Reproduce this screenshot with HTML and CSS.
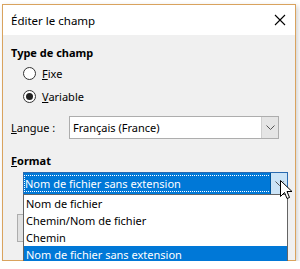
FILE: index.html
```html
<!DOCTYPE html>
<html lang="fr">
<head>
    <meta charset="UTF-8">
    <meta name="viewport" content="width=device-width, initial-scale=1.0">
    <title>Éditer le champ</title>
    <link rel="stylesheet" href="styles.css">
</head>
<body>
    <div class="window">
        <div class="titlebar">
            <span class="title">Éditer le champ</span>
            <svg class="close" width="12" height="12" viewBox="0 0 12 12">
                <path d="M1 1 L11 11 M11 1 L1 11" stroke="#000" stroke-width="1.1" fill="none"/>
            </svg>
        </div>
        <div class="content">
            <div class="section-title">Type de champ</div>
            <div class="radios">
                <label class="radio"><span class="dot"></span><span><u>F</u>ixe</span></label>
                <label class="radio checked"><span class="dot"></span><span><u>V</u>ariable</span></label>
            </div>
            <div class="lang-row">
                <span class="lang-label"><u>L</u>angue :</span>
                <div class="combo">
                    <span class="combo-text">Français (France)</span>
                    <span class="combo-btn">
                        <svg width="9" height="6" viewBox="0 0 9 6"><path d="M0.5 0.5 L4.5 4.5 L8.5 0.5" stroke="#555" fill="none"/></svg>
                    </span>
                </div>
            </div>
            <div class="section-title format-title"><u>F</u>ormat</div>
            <div class="format-wrap">
                <div class="combo focused">
                    <span class="combo-text"><span class="focus-rect">Nom de fichier sans extension</span></span>
                    <span class="combo-btn">
                        <svg width="9" height="6" viewBox="0 0 9 6"><path d="M0.5 0.5 L4.5 4.5 L8.5 0.5" stroke="#555" fill="none"/></svg>
                    </span>
                </div>
                <div class="hidden-button"></div>
                <ul class="popup">
                    <li>Nom de fichier</li>
                    <li>Chemin/Nom de fichier</li>
                    <li>Chemin</li>
                    <li class="selected">Nom de fichier sans extension</li>
                </ul>
                <svg class="cursor" width="13" height="21" viewBox="0 0 13 21">
                    <path d="M0.5 0.5 L0.5 16.5 L4.5 12.5 L7 18.5 L9.5 17.5 L7 11.5 L12 11.5 Z" fill="#fff" stroke="#000" stroke-width="1"/>
                </svg>
            </div>
        </div>
    </div>
</body>
</html>
```

FILE: styles.css
```css
body {
    margin: 0;
    padding: 0;
    background: #ffffff;
    font-family: "Noto Sans", sans-serif;
    font-size: 11px;
    color: #000;
}
.window {
    margin: 4px 0 0 2px;
    width: 292px;
    height: 255px;
    border: 1px solid #d9a35e;
    background: #f0f0f0;
    box-shadow: 2px 2px 5px rgba(0, 0, 0, 0.18);
    display: flex;
    flex-direction: column;
}
.titlebar {
    height: 30px;
    background: #ffffff;
    display: flex;
    align-items: center;
    justify-content: space-between;
    padding: 0 9px 0 8px;
}
.title {
    font-size: 11.5px;
}
.content {
    padding: 10px 8px 0 8px;
    display: flex;
    flex-direction: column;
}
.section-title {
    font-weight: bold;
    height: 16px;
    line-height: 16px;
}
.radios {
    display: flex;
    flex-direction: column;
    gap: 6px;
    padding: 4px 0 0 12px;
}
.radio {
    display: flex;
    align-items: center;
    gap: 6px;
    height: 17px;
}
.dot {
    width: 11px;
    height: 11px;
    border: 1px solid #333;
    border-radius: 50%;
    background: #fff;
    position: relative;
}
.radio.checked .dot::after {
    content: "";
    position: absolute;
    left: 2px;
    top: 2px;
    width: 7px;
    height: 7px;
    border-radius: 50%;
    background: #222;
}
.lang-row {
    display: flex;
    align-items: center;
    margin-top: 11px;
}
.lang-label {
    width: 58px;
}
.combo {
    flex: 1;
    height: 21px;
    margin-right: 8px;
    border: 1px solid #adadad;
    background: #fff;
    display: flex;
}
.combo-text {
    flex: 1;
    display: flex;
    align-items: center;
    padding-left: 3px;
}
.combo-btn {
    width: 16px;
    background: #e5e5e5;
    border-left: 1px solid #cfcfcf;
    display: flex;
    align-items: center;
    justify-content: center;
}
.format-title {
    margin-top: 14px;
}
.format-wrap {
    position: relative;
    margin: 3px 0 0 12px;
    height: 80px;
}
.combo.focused {
    flex: none;
    width: 263px;
    height: 21px;
    margin: 0;
    border-color: #2a6ab0;
}
.combo.focused .combo-text {
    background: #0078d7;
    color: #fff;
    padding: 2px 0 2px 1px;
}
.focus-rect {
    display: block;
    flex: 1;
    height: 15px;
    line-height: 15px;
    outline: 1px dotted #ffffff;
    padding-left: 0;
}
.combo.focused .combo-btn {
    background: #cce4f7;
    border-left: 1px solid #005499;
}
.hidden-button {
    position: absolute;
    left: -6px;
    top: 42px;
    width: 60px;
    height: 26px;
    background: #e1e1e1;
    border: 1px solid #adadad;
}
.popup {
    position: absolute;
    left: 0;
    top: 22px;
    width: 263px;
    margin: 0;
    padding: 0;
    list-style: none;
    background: #fff;
    border: 1px solid #646464;
}
.popup li {
    height: 17px;
    line-height: 17px;
    padding-left: 2px;
}
.popup li.selected {
    background: #0078d7;
    color: #fff;
}
.cursor {
    position: absolute;
    left: 257px;
    top: 8px;
}
```
